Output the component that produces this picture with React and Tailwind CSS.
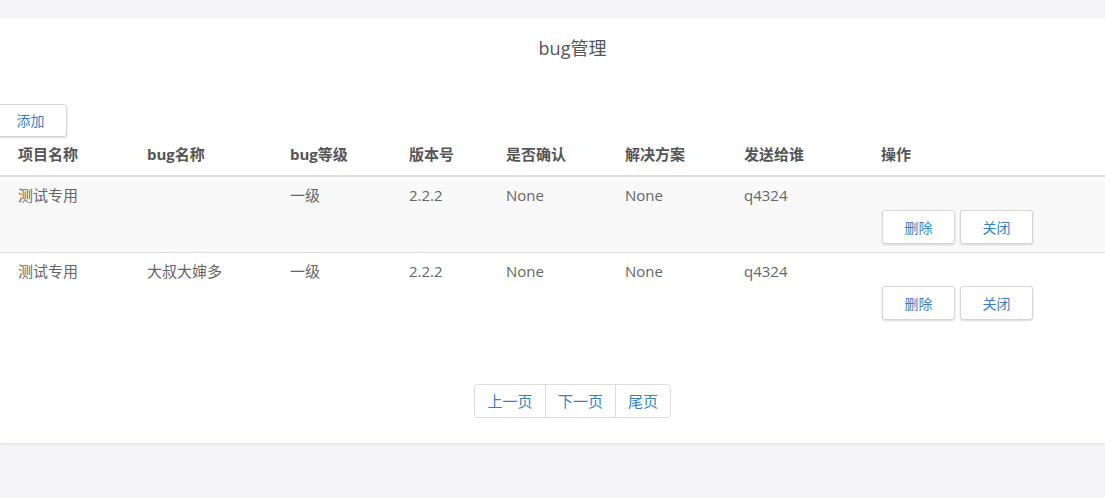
const cols = ["w-[129px]", "w-[143px]", "w-[119px]", "w-[97px]", "w-[119px]", "w-[119px]", "w-[137px]", "flex-1"];

const headers = ["项目名称", "bug名称", "bug等级", "版本号", "是否确认", "解决方案", "发送给谁", "操作"];

const rows = [
  ["测试专用", "", "一级", "2.2.2", "None", "None", "q4324"],
  ["测试专用", "大叔大婶多", "一级", "2.2.2", "None", "None", "q4324"],
];

function Btn({ children, className = "" }) {
  return (
    <button className={"h-[34px] rounded-[3px] border border-[#d6d6d6] bg-white text-[14px] text-[#3a7fbf] shadow-[0_1px_2px_rgba(0,0,0,0.15)] " + className}>
      {children}
    </button>
  );
}

export default function App() {
  return (
    <div className="min-h-[498px] bg-[#f5f4f8] pt-[18px] font-['Open_Sans','Noto_Sans_CJK_SC',sans-serif] text-[15px] text-[#666]">
      <div className="h-[425px] bg-white shadow-[0_1px_3px_rgba(0,0,0,0.1)]">
        <h1 className="pl-[40px] pt-[18px] text-center text-[18px] leading-[24px] text-[#555]">bug管理</h1>

        <button className="ml-[-6px] mt-[44px] h-[33px] w-[73px] rounded-[3px] border border-[#d6d6d6] bg-white text-[14px] text-[#3a7fbf] shadow-[0_1px_2px_rgba(0,0,0,0.15)]">
          添加
        </button>

        <div className="flex h-[40px] border-b-2 border-[#dddddd] pl-[18px] pt-[7px] font-bold text-[#555]">
          {headers.map((h, i) => (
            <div key={i} className={cols[i] + " leading-[20px]"}>{h}</div>
          ))}
        </div>

        {rows.map((r, ri) => (
          <div key={ri} className={"flex h-[76px] pl-[18px] pt-[8px] " + (ri === 0 ? "border-b border-[#dddddd] bg-[#f9f9f9]" : "")}>
            {r.map((c, i) => (
              <div key={i} className={cols[i] + " leading-[20px]"}>{c}</div>
            ))}
            <div className="flex-1 pt-[25px]">
              <div className="flex gap-[5px] pl-[1px]">
                <Btn className="w-[73px]">删除</Btn>
                <Btn className="w-[73px]">关闭</Btn>
              </div>
            </div>
          </div>
        ))}

        <div className="mt-[55px] flex justify-center">
          <div className="ml-[40px] flex h-[34px] overflow-hidden rounded-[4px] border border-[#dddddd] text-[15px] text-[#3a7fbf]">
            <div className="flex w-[70px] items-center justify-center">上一页</div>
            <div className="flex w-[70px] items-center justify-center border-l border-[#dddddd]">下一页</div>
            <div className="flex w-[55px] items-center justify-center border-l border-[#dddddd]">尾页</div>
          </div>
        </div>
      </div>
    </div>
  );
}
